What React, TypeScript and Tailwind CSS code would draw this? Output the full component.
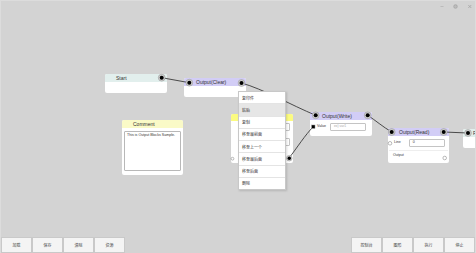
import React from "react";

const latin = "font-['Liberation_Sans','Noto_Sans_CJK_SC',sans-serif]";

function Port({ x, y, open = false }: { x: number; y: number; open?: boolean }) {
  return (
    <g>
      <circle cx={x} cy={y} r={3.4} fill={open ? "#ffffff" : "#cfcfcf"} stroke="#9a9a9a" strokeWidth={0.6} />
      {!open && <circle cx={x} cy={y} r={2} fill="#000" />}
    </g>
  );
}

const menuItems = ["复印件", "粘贴", "复制", "移至最前面", "移至上一个", "移至最后面", "移至后面", "删除"];

export default function App() {
  return (
    <div className={`w-[476px] h-[253px] bg-[#d3d3d3] flex flex-col overflow-hidden ${latin} border-t border-l border-r border-[#dcdcdc]`}>
      <div className="relative flex-1">
        {/* window controls */}
        <svg className="absolute left-[436px] top-[1px]" width="38" height="9" viewBox="0 0 38 9">
          <line x1="3.5" y1="4.5" x2="6.5" y2="4.5" stroke="#b0b0b0" strokeWidth="0.7" />
          <rect x="16.8" y="2.8" width="3.4" height="3.4" rx="1.4" fill="#bdbdbd" stroke="#a0a0a0" strokeWidth="0.7" />
          <path d="M31.3 3 L34.3 6 M34.3 3 L31.3 6" stroke="#a5a5a5" strokeWidth="0.8" />
        </svg>

        {/* Start node */}
        <div className="absolute left-[104px] top-[73px] w-[62px] h-[19px] bg-white rounded-[2px] overflow-hidden">
          <div className="h-[8px] bg-[#e2efed] flex items-center pl-[11px] text-[5px] leading-none text-[#333]">Start</div>
        </div>

        {/* Output(Clear) node */}
        <div className="absolute left-[183px] top-[77px] w-[62px] h-[19px] bg-white rounded-[2px] overflow-hidden">
          <div className="h-[8px] bg-[#d2cdf6] flex items-center pl-[12px] text-[5px] leading-none text-[#333]">Output(Clear)</div>
        </div>

        {/* Comment node */}
        <div className="absolute left-[121px] top-[119px] w-[61px] h-[55px] bg-white rounded-[2px] overflow-hidden flex flex-col">
          <div className="h-[8px] bg-[#fafac7] flex items-center pl-[11px] text-[5px] leading-none text-[#333]">Comment</div>
          <div className="flex-1 px-[2px] pt-[3px] pb-[4px]">
            <div className="h-full border border-[#b8b8b8] rounded-[1px] px-[2px] pt-[2px] text-[3.6px] leading-none text-[#333]">
              This is Output Blocks Sample.
            </div>
          </div>
        </div>

        {/* hidden node under menu */}
        <div className="absolute left-[230px] top-[113px] w-[62px] h-[49px] bg-white rounded-[2px] overflow-hidden flex flex-col">
          <div className="h-[7px] bg-[#fbfb80]" />
          <div className="flex flex-col items-end pr-[3px] pt-[2px] gap-[7px]">
            <div className="w-[30px] h-[8px] border border-[#c4c4c4] rounded-[1px]" />
            <div className="w-[30px] h-[8px] border border-[#c4c4c4] rounded-[1px]" />
          </div>
        </div>

        {/* Output(Write) node */}
        <div className="absolute left-[309px] top-[111px] w-[62px] h-[24px] bg-white rounded-[2px] overflow-hidden flex flex-col">
          <div className="h-[8px] bg-[#d2cdf6] flex items-center pl-[12px] text-[5px] leading-none text-[#333]">Output(Write)</div>
          <div className="flex items-center pl-[7px] pt-[3px] gap-[4px]">
            <span className="text-[3.6px] leading-none text-[#333]">Value</span>
            <div className="w-[36px] h-[8px] border border-[#c4c4c4] rounded-[1px] flex items-center pl-[3px] text-[3.4px] leading-none text-[#aaa]">ex) var1</div>
          </div>
        </div>

        {/* Output(Read) node */}
        <div className="absolute left-[387px] top-[127px] w-[61px] h-[35px] bg-white rounded-[2px] overflow-hidden flex flex-col">
          <div className="h-[8px] bg-[#d2cdf6] flex items-center pl-[11px] text-[5px] leading-none text-[#333]">Output(Read)</div>
          <div className="flex items-center pl-[6px] pt-[3px] gap-[8px]">
            <span className="text-[3.6px] leading-none text-[#333]">Line</span>
            <div className="w-[36px] h-[8px] border border-[#c4c4c4] rounded-[1px] flex items-center pl-[3px] text-[3.6px] leading-none text-[#333]">0</div>
          </div>
          <div className="mt-[3px] mx-[1px] border-t border-[#eeeeee]" />
          <div className="pl-[5px] pt-[3px] text-[3.6px] leading-none text-[#333]">Output</div>
        </div>

        {/* partial node on right edge */}
        <div className="absolute left-[462px] top-[128px] w-[30px] h-[19px] bg-white rounded-[2px] overflow-hidden">
          <div className="h-[8px] bg-[#e2efed] flex items-center pl-[10px] text-[5px] leading-none text-[#333]">F</div>
        </div>

        {/* links and ports */}
        <svg className="absolute left-0 top-0" width="476" height="237" viewBox="0 0 476 237">
          <g stroke="#3a3a3a" strokeWidth="0.9" fill="none">
            <path d="M160.7 76.7 L188.3 81.7" />
            <path d="M240.5 82 C262 88 290 104 314.7 114.3" />
            <path d="M288 157 C296 147 304 134 312.3 125.7" />
            <path d="M366.7 114.3 C374 119 382 126 390.7 131" />
            <path d="M442.7 131 L467 132" />
          </g>
          <Port x={160.7} y={76.7} />
          <Port x={188.3} y={81.7} />
          <Port x={240.5} y={82} />
          <Port x={314.7} y={114.3} />
          <Port x={366.7} y={114.3} />
          <rect x={310.6} y={124} width={3.4} height={3.4} fill="#000" stroke="#999" strokeWidth={0.5} />
          <Port x={390.7} y={131} />
          <Port x={442.7} y={131} />
          <Port x={467} y={132} />
          <circle cx={389} cy={142.3} r={1.8} fill="#fff" stroke="#777" strokeWidth={0.5} />
          <circle cx={443.7} cy={157} r={1.8} fill="#fff" stroke="#777" strokeWidth={0.5} />
          <circle cx={231.5} cy={157.7} r={1.4} fill="#fff" stroke="#777" strokeWidth={0.5} />
          <circle cx={288.3} cy={157.2} r={2.8} fill="#cfcfcf" stroke="#9a9a9a" strokeWidth={0.6} />
          <circle cx={288.3} cy={157.2} r={1.7} fill="#000" />
        </svg>

        {/* context menu */}
        <div className="absolute left-[237px] top-[90px] w-[48px] h-[99px] bg-white border border-[#c8c8c8] shadow-[1px_1px_2px_rgba(0,0,0,0.15)] flex flex-col">
          {menuItems.map((t, i) => (
            <div
              key={t}
              className={`flex-1 flex items-center pl-[3px] text-[4px] leading-none text-[#333] font-['Noto_Sans_CJK_SC',sans-serif] ${i < menuItems.length - 1 ? "border-b border-[#e4e4e4]" : ""} ${i === 1 ? "bg-[#e6e6e6]" : ""}`}
            >
              {t}
            </div>
          ))}
        </div>
      </div>

      {/* bottom bar */}
      <div className="h-[16px] flex justify-between font-['Noto_Sans_CJK_SC',sans-serif]">
        <div className="flex">
          {["加载", "保存", "清除", "资源"].map((t) => (
            <div key={t} className="w-[31px] h-[16px] bg-[#f4f4f4] border border-[#c9c9c9] flex items-center justify-center text-[4px] leading-none text-[#444]">{t}</div>
          ))}
        </div>
        <div className="flex">
          {["控制台", "图形", "执行", "停止"].map((t) => (
            <div key={t} className="w-[31px] h-[16px] bg-[#f4f4f4] border border-[#c9c9c9] flex items-center justify-center text-[4px] leading-none text-[#444]">{t}</div>
          ))}
        </div>
      </div>
    </div>
  );
}
